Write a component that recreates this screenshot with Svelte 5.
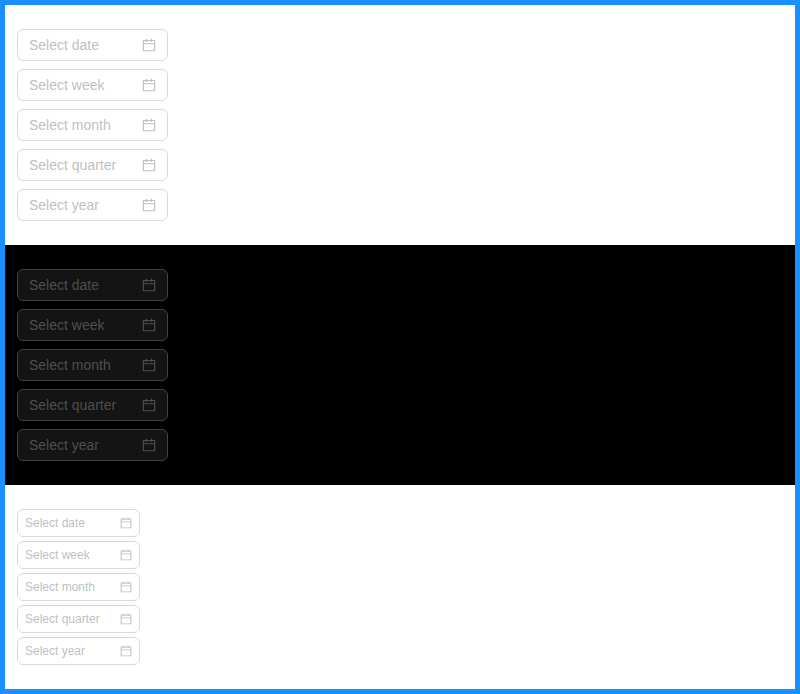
<script>
  const items = ['date', 'week', 'month', 'quarter', 'year'];
  const themes = ['light', 'dark', 'compact'];
</script>

<main>
  {#each themes as theme}
    <section class={theme}>
      {#each items as item}
        <div class="picker">
          <input readonly placeholder={`Select ${item}`} aria-label={`Select ${item}`} />
          <svg viewBox="64 64 896 896" fill="currentColor" aria-hidden="true">
            <path d="M880 184H712v-64c0-4.400-3.600-8-8-8h-56c-4.400 0-8 3.600-8 8v64H384v-64c0-4.400-3.600-8-8-8h-56c-4.400 0-8 3.600-8 8v64H144c-17.700 0-32 14.300-32 32v664c0 17.700 14.300 32 32 32h736c17.700 0 32-14.300 32-32V216c0-17.700-14.300-32-32-32zm-40 656H184V460h656v380zM184 392V256h128v48c0 4.400 3.600 8 8 8h56c4.400 0 8-3.600 8-8v-48h256v48c0 4.400 3.600 8 8 8h56c4.400 0 8-3.600 8-8v-48h128v136H184z" />
          </svg>
        </div>
      {/each}
    </section>
  {/each}
</main>

<style>
  main {
    box-sizing: border-box;
    width: 800px;
    height: 694px;
    border: 5px solid #1890ff;
    font-family: "Liberation Sans", Arial, sans-serif;
  }
  section {
    box-sizing: border-box;
    height: 240px;
    padding: 24px 12px;
    display: flex;
    flex-direction: column;
    align-items: flex-start;
    gap: 8px;
    background: #fff;
  }
  .picker {
    box-sizing: border-box;
    display: flex;
    align-items: center;
    width: 151px;
    height: 32px;
    padding: 0 11px;
    border: 1px solid #d9d9d9;
    border-radius: 6px;
    background: #fff;
  }
  input {
    flex: 1;
    min-width: 0;
    padding: 0;
    border: 0;
    outline: 0;
    background: transparent;
    font: 14px/22px "Liberation Sans", Arial, sans-serif;
  }
  input::placeholder {
    color: #bfbfbf;
    opacity: 1;
  }
  svg {
    flex: none;
    width: 14px;
    height: 14px;
    margin-left: 4px;
    color: #bfbfbf;
  }
  .dark {
    background: #000;
  }
  .dark .picker {
    background: #141414;
    border-color: #424242;
  }
  .dark input::placeholder,
  .dark svg {
    color: rgba(255, 255, 255, 0.25);
  }
  .compact {
    height: 204px;
    gap: 4px;
  }
  .compact .picker {
    width: 123px;
    height: 28px;
    padding: 0 7px;
  }
  .compact input {
    font-size: 12px;
    line-height: 20px;
  }
  .compact svg {
    width: 12px;
    height: 12px;
  }
</style>
